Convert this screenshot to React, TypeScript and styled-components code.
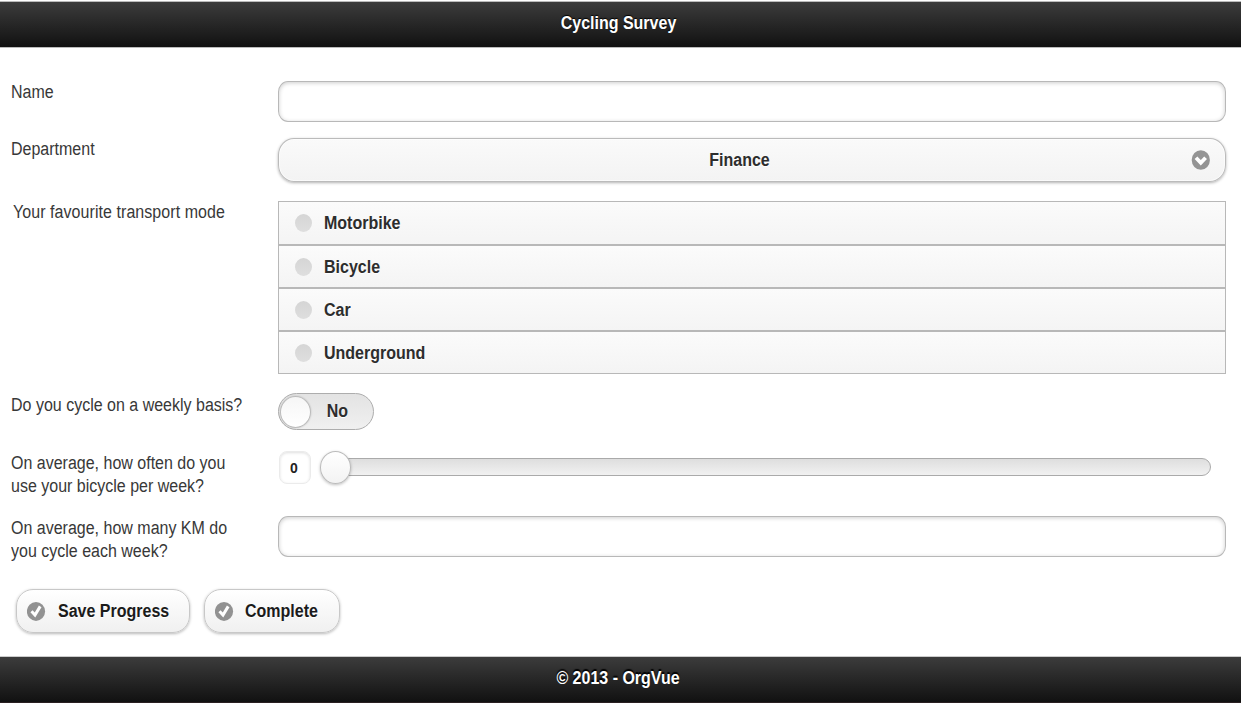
import React, { useState } from "react";
import styled, { createGlobalStyle } from "styled-components";

const GlobalStyle = createGlobalStyle`
  * { box-sizing: border-box; }
  body {
    margin: 0;
    background: #fff;
    overflow: hidden;
    font-family: "Liberation Sans", Arial, Helvetica, sans-serif;
    font-size: 16px;
    line-height: 21.3px;
    color: #383838;
  }
`;

const Page = styled.div`
  width: 1241px;
  height: 709px;
  display: flex;
  flex-direction: column;
`;

const Bar = styled.div<{ $top: string; $bottom: string; $shift: number; $drop: number }>`
  flex: none;
  height: 47px;
  border-top: 1px solid ${(p) => p.$top};
  border-bottom: 1px solid ${(p) => p.$bottom};
  background: linear-gradient(#3c3c3c, #111) padding-box;
  color: #fff;
  font-weight: bold;
  text-shadow: 0 -1px 1px #000;
  display: flex;
  justify-content: center;
  padding: ${(p) => p.$drop}px ${(p) => p.$shift}px 0 0;
`;

const Header = styled(Bar)`
  margin-top: 1px;
`;

const Tall = styled.span<{ $spacing?: number }>`
  display: block;
  flex: none;
  letter-spacing: ${(p) => p.$spacing ?? 0}px;
  transform: scaleY(1.1);
  transform-origin: 0 0;
  white-space: nowrap;
`;

const Form = styled.form`
  flex: none;
  height: 608px;
  padding: 32px 15px 0 11px;
`;

const Row = styled.div<{ $height: number }>`
  display: grid;
  grid-template-columns: 267px 1fr;
  height: ${(p) => p.$height}px;
`;

const Label = styled.label<{ $indent?: number; $drop?: number }>`
  display: block;
  padding: ${(p) => p.$drop ?? 0}px 0 0 ${(p) => p.$indent ?? 0}px;
  text-shadow: 0 1px 0 #fff;
`;

const TextInput = styled.input<{ $drop?: number }>`
  display: block;
  width: 100%;
  height: 41px;
  margin: ${(p) => p.$drop ?? 0}px 0 0;
  padding: 0 10px;
  border: 1px solid #b8b8b8;
  border-radius: 10px / 11px;
  background: #fff;
  box-shadow: inset 0 1px 4px rgba(0, 0, 0, 0.2);
  font: inherit;
  outline: none;
`;

const SelectButton = styled.div`
  height: 44px;
  margin-top: 1px;
  display: grid;
  grid-template-columns: 1fr auto 1fr;
  align-items: start;
  padding: 9px 15px 0 10px;
  border: 1px solid #bbb;
  border-radius: 16px / 17px;
  background: linear-gradient(#fafafa, #f3f3f3);
  box-shadow: 0 1px 3px rgba(0, 0, 0, 0.3), inset 0 0 0 1px rgba(255, 255, 255, 0.6);
  color: #2d2d2d;
  font-weight: bold;
  text-shadow: 0 1px 0 #fff;
`;

const Middle = styled.div`
  grid-column: 2;
  margin: 0 10px 0 -10px;
`;

const End = styled.div`
  display: flex;
  justify-content: flex-end;
  padding-top: 2px;
`;

const Options = styled.div`
  height: 173px;
  margin-top: 1px;
  display: grid;
  grid-template-rows: 42px repeat(3, 41px);
  row-gap: 2px;
  border: 1px solid #b8b8b8;
  background: #b8b8b8;
`;

const Option = styled.div`
  display: flex;
  align-items: center;
  gap: 12px;
  padding-left: 16px;
  background: linear-gradient(#fbfbfb, #f4f4f4);
  color: #2d2d2d;
  font-weight: bold;
  text-shadow: 0 1px 0 #fff;
  cursor: pointer;
`;

const OptionText = styled.span`
  padding-bottom: 2px;
`;

const Dot = styled.span<{ $on: boolean }>`
  width: 17px;
  height: 18px;
  border-radius: 50%;
  background: ${(p) => (p.$on ? "#5393c5" : "linear-gradient(#d5d5d5, #dedede)")};
`;

const Toggle = styled.div`
  width: 96px;
  height: 37px;
  display: flex;
  padding: 2px 25px 0 1px;
  border: 1px solid #adadad;
  border-radius: 19px;
  background: linear-gradient(#e3e3e3, #f0f0f0);
  justify-content: space-between;
  color: #2d2d2d;
  font-weight: bold;
  text-shadow: 0 1px 0 #fff;
`;

const ToggleText = styled.div`
  padding-top: 3px;
`;

const Knob = styled.span`
  flex: none;
  width: 31px;
  height: 33px;
  border: 1px solid #bbb;
  border-radius: 50%;
  background: linear-gradient(#fff, #f3f3f3);
  box-shadow: 0 1px 3px rgba(0, 0, 0, 0.25);
`;

const ToggleKnob = styled(Knob)`
  height: 32px;
  background: linear-gradient(#f6f6f6, #fff);
  box-shadow: 0 0 2px rgba(0, 0, 0, 0.2);
`;

const SliderRow = styled.div`
  display: flex;
  height: 33px;
  align-items: flex-start;
  padding-right: 15px;
`;

const NumberBox = styled.div`
  flex: none;
  width: 32px;
  height: 33px;
  margin: 0 9px 0 1px;
  padding: 4px 2px 0 0;
  display: flex;
  justify-content: center;
  border: 1px solid #ebebeb;
  border-radius: 8px;
  box-shadow: inset 0 1px 3px rgba(0, 0, 0, 0.13);
  font-size: 14px;
  font-weight: bold;
  color: #222;
`;

const Track = styled.div`
  flex: 1;
  height: 18px;
  margin: 7px 0 0 -16px;
  border: 1px solid #aaa;
  border-radius: 9px;
  background: linear-gradient(#dedede, #f1f1f1);
`;

const SliderKnob = styled(Knob)`
  position: relative;
  z-index: 1;
`;

const Actions = styled.div`
  display: flex;
  gap: 14px;
  padding-left: 5px;
`;

const ActionButton = styled.button<{ $width: number; $gap: number }>`
  width: ${(p) => p.$width}px;
  height: 44px;
  display: flex;
  align-items: flex-start;
  gap: ${(p) => p.$gap}px;
  margin: 0;
  padding: 9px 0 0 10px;
  border: 1px solid #c8c8c8;
  border-radius: 17px;
  background: linear-gradient(#fff, #f0f0f0);
  box-shadow: 0 1px 3px rgba(0, 0, 0, 0.28);
  color: #1b1b1b;
  font: inherit;
  font-weight: bold;
  text-shadow: 0 1px 0 #fff;
`;

const IconBox = styled.span`
  display: block;
  flex: none;
  padding-top: 2px;
  line-height: 0;
`;

const ChevronIcon = () => (
  <svg width="19" height="20" viewBox="0 0 19 20">
    <ellipse cx="9.8" cy="10" rx="9.1" ry="9.8" fill="#949494" />
    <path d="M5 7.8 L9.8 12.8 L14.6 7.8" fill="none" stroke="#fff" strokeWidth="3.8" />
  </svg>
);

const CheckIcon = () => (
  <svg width="19" height="20" viewBox="0 0 19 20">
    <ellipse cx="9" cy="10.4" rx="9.1" ry="9.5" fill="#929292" />
    <path d="M4.5 10.2 L8 14 L13.2 5.4" fill="none" stroke="#fff" strokeWidth="3" />
  </svg>
);

const modes = ["Motorbike", "Bicycle", "Car", "Underground"];

export default function App() {
  const [mode, setMode] = useState<string | null>(null);

  return (
    <>
      <GlobalStyle />
      <Page>
        <Header $top="#bbb" $bottom="#bbb" $shift={4} $drop={9}>
          <Tall>Cycling Survey</Tall>
        </Header>
        <Form>
          <Row $height={57}>
            <Label htmlFor="name">
              <Tall>Name</Tall>
            </Label>
            <TextInput id="name" $drop={1} />
          </Row>
          <Row $height={63}>
            <Label>
              <Tall>Department</Tall>
            </Label>
            <SelectButton>
              <Middle>
                <Tall>Finance</Tall>
              </Middle>
              <End>
                <ChevronIcon />
              </End>
            </SelectButton>
          </Row>
          <Row $height={193}>
            <Label $indent={2}>
              <Tall $spacing={0.06}>Your favourite transport mode</Tall>
            </Label>
            <Options>
              {modes.map((m) => (
                <Option key={m} onClick={() => setMode(m)}>
                  <Dot $on={m === mode} />
                  <OptionText>
                    <Tall>{m}</Tall>
                  </OptionText>
                </Option>
              ))}
            </Options>
          </Row>
          <Row $height={58}>
            <Label>
              <Tall>Do you cycle on a weekly basis?</Tall>
            </Label>
            <Toggle>
              <ToggleKnob />
              <ToggleText>
                <Tall>No</Tall>
              </ToggleText>
            </Toggle>
          </Row>
          <Row $height={65}>
            <Label>
              <Tall>
                On average, how often do you
                <br />
                use your bicycle per week?
              </Tall>
            </Label>
            <SliderRow>
              <NumberBox>
                <Tall>0</Tall>
              </NumberBox>
              <SliderKnob />
              <Track />
            </SliderRow>
          </Row>
          <Row $height={73}>
            <Label htmlFor="distance">
              <Tall>
                On average, how many KM do
                <br />
                you cycle each week?
              </Tall>
            </Label>
            <TextInput id="distance" />
          </Row>
          <Actions>
            <ActionButton type="button" $width={174} $gap={12}>
              <IconBox>
                <CheckIcon />
              </IconBox>
              <Tall>Save Progress</Tall>
            </ActionButton>
            <ActionButton type="button" $width={136} $gap={11}>
              <IconBox>
                <CheckIcon />
              </IconBox>
              <Tall>Complete</Tall>
            </ActionButton>
          </Actions>
        </Form>
        <Bar $top="#ccc" $bottom="#2a2022" $shift={5} $drop={9}>
          <Tall>© 2013 - OrgVue</Tall>
        </Bar>
      </Page>
    </>
  );
}
